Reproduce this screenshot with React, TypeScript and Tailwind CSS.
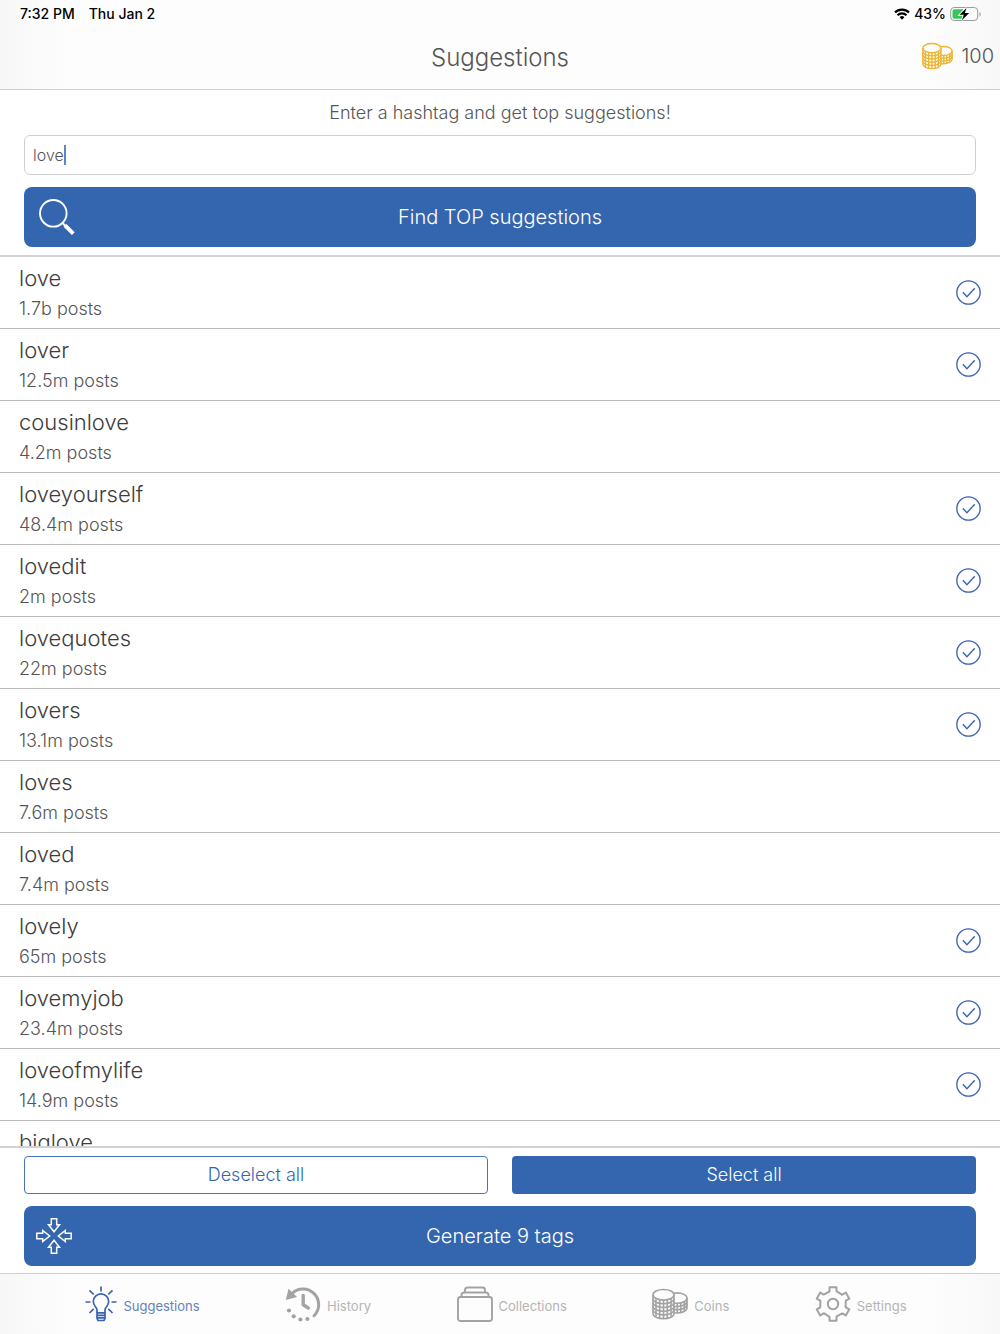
import { useState } from 'react'

interface Tag {
  name: string
  posts?: string
  selected: boolean
}

const initialTags: Tag[] = [
  { name: 'love', posts: '1.7b posts', selected: true },
  { name: 'lover', posts: '12.5m posts', selected: true },
  { name: 'cousinlove', posts: '4.2m posts', selected: false },
  { name: 'loveyourself', posts: '48.4m posts', selected: true },
  { name: 'lovedit', posts: '2m posts', selected: true },
  { name: 'lovequotes', posts: '22m posts', selected: true },
  { name: 'lovers', posts: '13.1m posts', selected: true },
  { name: 'loves', posts: '7.6m posts', selected: false },
  { name: 'loved', posts: '7.4m posts', selected: false },
  { name: 'lovely', posts: '65m posts', selected: true },
  { name: 'lovemyjob', posts: '23.4m posts', selected: true },
  { name: 'loveofmylife', posts: '14.9m posts', selected: true },
  { name: 'biglove', selected: false }
]

function WifiIcon() {
  return (
    <svg className="w-4 h-3" viewBox="0 0 16 12" fill="none" stroke="currentColor" strokeWidth="2.2">
      <path d="M1 4.4a10 10 0 0 1 14 0" />
      <path d="M3.5 7.2a6.4 6.4 0 0 1 9 0" />
      <path d="M8 11.8 5.6 9.3a3.4 3.4 0 0 1 4.8 0z" fill="currentColor" stroke="none" />
    </svg>
  )
}

function BatteryIcon() {
  return (
    <svg className="w-8 h-4" viewBox="0 0 32 16" fill="none">
      <rect x="0.7" y="1.5" width="27" height="13" rx="3.5" stroke="#9a9a9a" />
      <path d="M29.5 6c1.6.6 1.6 4 0 4.6z" fill="#9a9a9a" />
      <path d="M4.5 3.2h8.5v9.6H4.5a2 2 0 0 1-2-2V5.2a2 2 0 0 1 2-2z" fill="#35c759" />
      <path d="M16.5 2 9.5 8.8h4.2L12 14.2l7.2-7.1h-4.3z" fill="#000" stroke="#fff" strokeWidth="1.8" paintOrder="stroke" />
    </svg>
  )
}

function CoinsIcon({ className }: { className: string }) {
  return (
    <svg className={className} viewBox="0 0 36 32" fill="none" stroke="currentColor" strokeWidth="1.6">
      <ellipse cx="11.5" cy="6.8" rx="10.5" ry="5.3" />
      <path d="M1 6.8v18.6c0 3 4.7 5.3 10.5 5.3S22 28.4 22 25.4V6.8" />
      {[10.5, 14.2, 17.9, 21.6].map((y) => (
        <path key={y} d={`M1 ${y}c0 3 4.7 5.3 10.5 5.3S22 ${y + 3} 22 ${y}`} />
      ))}
      <path d="M4 10.5v18M7.7 12v18M11.5 12.2v18.3M15.3 12v18M19 10.5v18" />
      <path d="M22 5.3c1-.3 2-.4 3-.4 5.5 0 10 2.3 10 5.2s-4.5 5.2-10 5.2c-1 0-2-.1-3-.3" />
      <path d="M35 10.1v9.6c0 3-4.5 5.3-10 5.3-1 0-2-.1-3-.3" />
      <path d="M35 13.3c0 2.9-4.5 5.2-10 5.2-1 0-2-.1-3-.3M35 16.5c0 2.9-4.5 5.2-10 5.2-1 0-2-.1-3-.3" />
      <path d="M25.3 15.3v9.6M28.8 15v9.5M32.2 13.5v9.3" />
    </svg>
  )
}

function SearchIcon() {
  return (
    <svg className="w-9 h-9" viewBox="0 0 36 36" fill="none" stroke="currentColor">
      <circle cx="14.3" cy="14.3" r="13.3" strokeWidth="1.9" />
      <path d="m23.5 24 3 3" strokeWidth="2" />
      <path d="m26 26.3 8.3 8.3" strokeWidth="4" />
    </svg>
  )
}

function MergeIcon() {
  return (
    <svg className="w-9 h-9" viewBox="0 0 36 36" fill="none" stroke="currentColor" strokeWidth="1.5">
      {[0, 90, 180, 270].map((angle) => (
        <path key={angle} d="M15.3 .8h5.4v5.9h2.8L18 13.7l-5.5-7h2.8z" transform={`rotate(${angle} 18 18)`} />
      ))}
    </svg>
  )
}

function BulbIcon() {
  return (
    <svg className="w-8 h-9" viewBox="0 0 32 36" fill="none" stroke="currentColor" strokeWidth="1.7">
      <path d="M12 26.5v-2.7c0-2.3-3.7-3.9-3.7-8.3a7.7 7.7 0 0 1 15.4 0c0 4.4-3.7 6-3.7 8.3v2.7" />
      <path d="M12 26.8h8v5.5l-1 2.2h-6l-1-2.2zM12 29.3h8M12 31.9h8" />
      <path d="M16 .5v5M4.5 4.3l4.2 4.2M27.5 4.3l-4.2 4.2M.5 16h5M26.5 16h5M4.5 27l4.2-4.2M27.5 27l-4.2-4.2" />
    </svg>
  )
}

function HistoryIcon() {
  return (
    <svg className="w-9 h-9" viewBox="0 0 36 36" fill="none" stroke="currentColor">
      <path d="M7 7.5a15.3 15.3 0 1 1 22 22.3" strokeWidth="3" strokeLinecap="round" />
      <path d="M3.5 2.8.8 14l11.2-3z" fill="currentColor" stroke="none" />
      <path d="M18.2 9.5v9.3l5 3.2" strokeWidth="3.4" strokeLinecap="round" strokeLinejoin="round" />
      <g fill="currentColor" stroke="none">
        <circle cx="4" cy="24.5" r="2.1" />
        <circle cx="8.7" cy="30.3" r="2.1" />
        <circle cx="15.4" cy="33.5" r="2.1" />
        <circle cx="22.4" cy="33" r="2.1" />
      </g>
    </svg>
  )
}

function CollectionsIcon() {
  return (
    <svg className="w-9 h-9" viewBox="0 0 36 36" fill="none" stroke="currentColor" strokeWidth="1.9">
      <rect x="1" y="11" width="34" height="24" rx="2.5" />
      <path d="M4.5 11V9.3c0-1.7 1-2.8 2.7-2.8h21.6c1.7 0 2.7 1.1 2.7 2.8V11" />
      <path d="M8 6.5V4c0-1.6 1-2.5 2.5-2.5h15C27 1.5 28 2.4 28 4v2.5" />
    </svg>
  )
}

function GearIcon() {
  return (
    <svg className="w-9 h-9" viewBox="0 0 36 36" fill="none" stroke="currentColor" strokeWidth="2" strokeLinejoin="round" strokeLinecap="round">
      <circle cx="18" cy="18" r="5.2" />
      {/* one tooth and the edge up to the next one, six times round */}
      {[0, 60, 120, 180, 240, 300].map((angle) => (
        <path key={angle} d="M14.5 5.2V1.2h7v4L26.8 8.6" transform={`rotate(${angle} 18 18)`} />
      ))}
    </svg>
  )
}

function CheckIcon() {
  return (
    <svg className="hidden w-[25px] h-[25px] text-[#3a63b0] peer-checked:block" viewBox="0 0 24 24" fill="none" stroke="currentColor" strokeWidth="1.3">
      <circle cx="12" cy="12" r="11.2" />
      <path d="m6.5 11.8 4 4.2 7.5-8" />
    </svg>
  )
}

const tabs = [
  { label: 'Suggestions', icon: <BulbIcon /> },
  { label: 'History', icon: <HistoryIcon /> },
  { label: 'Collections', icon: <CollectionsIcon /> },
  { label: 'Coins', icon: <CoinsIcon className="w-9 h-8" /> },
  { label: 'Settings', icon: <GearIcon /> }
]

export default function App() {
  const [query, setQuery] = useState('love')
  const [tags, setTags] = useState(initialTags)
  const [activeTab, setActiveTab] = useState('Suggestions')

  const selectedCount = tags.filter((t) => t.selected).length

  const toggleTag = (name: string) => {
    setTags(tags.map((t) => (t.name === name ? { ...t, selected: !t.selected } : t)))
  }

  const setAll = (selected: boolean) => {
    setTags(tags.map((t) => ({ ...t, selected })))
  }

  return (
    <div className="flex flex-col h-screen bg-white font-['Inter','Liberation_Sans',sans-serif] font-light text-[#555]">
      {/* Status bar and title */}
      <header className="shrink-0 border-b border-[#cfcfcf] bg-[linear-gradient(to_right,#f7f7f7,#fdfdfd_7%,#fdfdfd_93%,#f8f8f8)]">
        <div className="flex items-center justify-between h-7 pl-5 pr-[18px] text-sm font-medium text-black">
          <div className="flex gap-3.5">
            <span>7:32 PM</span>
            <span>Thu Jan 2</span>
          </div>
          <div className="flex items-center gap-1">
            <WifiIcon />
            <span>43%</span>
            <BatteryIcon />
          </div>
        </div>
        <div className="grid grid-cols-3 items-center pt-[13px] pb-[15px]">
          <h1 className="col-start-2 text-center text-2xl leading-[33px]">Suggestions</h1>
          <div className="flex items-center justify-end gap-2 pr-1.5 pb-1">
            <CoinsIcon className="w-[31px] h-7 text-[#ecb52f]" />
            <span className="text-xl">100</span>
          </div>
        </div>
      </header>

      {/* Search */}
      <section className="shrink-0 px-6 pt-[13px] pb-2 border-b-2 border-[#d2d2d2]">
        <label htmlFor="hashtag" className="block text-center text-lg leading-5 mb-3">
          Enter a hashtag and get top suggestions!
        </label>
        <label className="flex items-center h-10 mb-3 px-2 border border-[#cfcfcf] rounded-md cursor-text">
          <input
            id="hashtag"
            type="text"
            value={query}
            onChange={(e) => setQuery(e.target.value)}
            className="field-sizing-content text-base outline-none caret-transparent"
          />
          <span className="w-0.5 h-5 bg-[#5b86c8]" />
        </label>
        <button type="button" className="grid grid-cols-[1fr_auto_1fr] items-center w-full h-15 px-[15px] rounded-lg bg-[#3466af] text-white text-xl">
          <SearchIcon />
          <span>Find TOP suggestions</span>
        </button>
      </section>

      {/* Results */}
      <ul className="flex-1 min-h-0 overflow-hidden">
        {tags.map((tag) => (
          <li key={tag.name} className="border-b border-[#bbb]">
            <label className="flex items-center justify-between h-[71px] px-[19px]">
              <span className="h-15">
                <span className="block text-[22px] leading-[30px] text-[#3c3c3c]">{tag.name}</span>
                {tag.posts && <span className="block text-lg leading-8">{tag.posts}</span>}
              </span>
              <input type="checkbox" checked={tag.selected} onChange={() => toggleTag(tag.name)} className="peer sr-only" />
              <CheckIcon />
            </label>
          </li>
        ))}
      </ul>

      {/* Actions */}
      <section className="shrink-0 grid grid-cols-2 gap-x-6 gap-y-3 px-6 pt-2 pb-[7px] border-t-2 border-[#d2d2d2] text-white">
        <button type="button" onClick={() => setAll(false)} className="h-[38px] rounded-sm border border-[#4a72b8] text-[#3466af] text-lg">
          Deselect all
        </button>
        <button type="button" onClick={() => setAll(true)} className="h-[38px] rounded-sm bg-[#3466af] text-lg">
          Select all
        </button>
        <button type="button" className="col-span-2 grid grid-cols-[1fr_auto_1fr] items-center h-15 px-3 rounded-lg bg-[#3466af] text-xl">
          <MergeIcon />
          <span>Generate {selectedCount} tags</span>
        </button>
      </section>

      {/* Tab bar */}
      <nav className="shrink-0 flex items-center justify-evenly h-[61px] pr-2 border-t border-[#cfcfcf] bg-[linear-gradient(to_right,#f7f7f7,#fdfdfd_7%,#fdfdfd_93%,#f8f8f8)]">
        {tabs.map((tab) => (
          <button
            key={tab.label}
            type="button"
            onClick={() => setActiveTab(tab.label)}
            className={activeTab === tab.label ? 'flex items-center gap-1.5 text-[#3a63b0]' : 'flex items-center gap-1.5 text-[#a3a3a3]'}
          >
            {tab.icon}
            <span className="pt-1.5 text-[13px] font-normal opacity-80">{tab.label}</span>
          </button>
        ))}
      </nav>
    </div>
  )
}
